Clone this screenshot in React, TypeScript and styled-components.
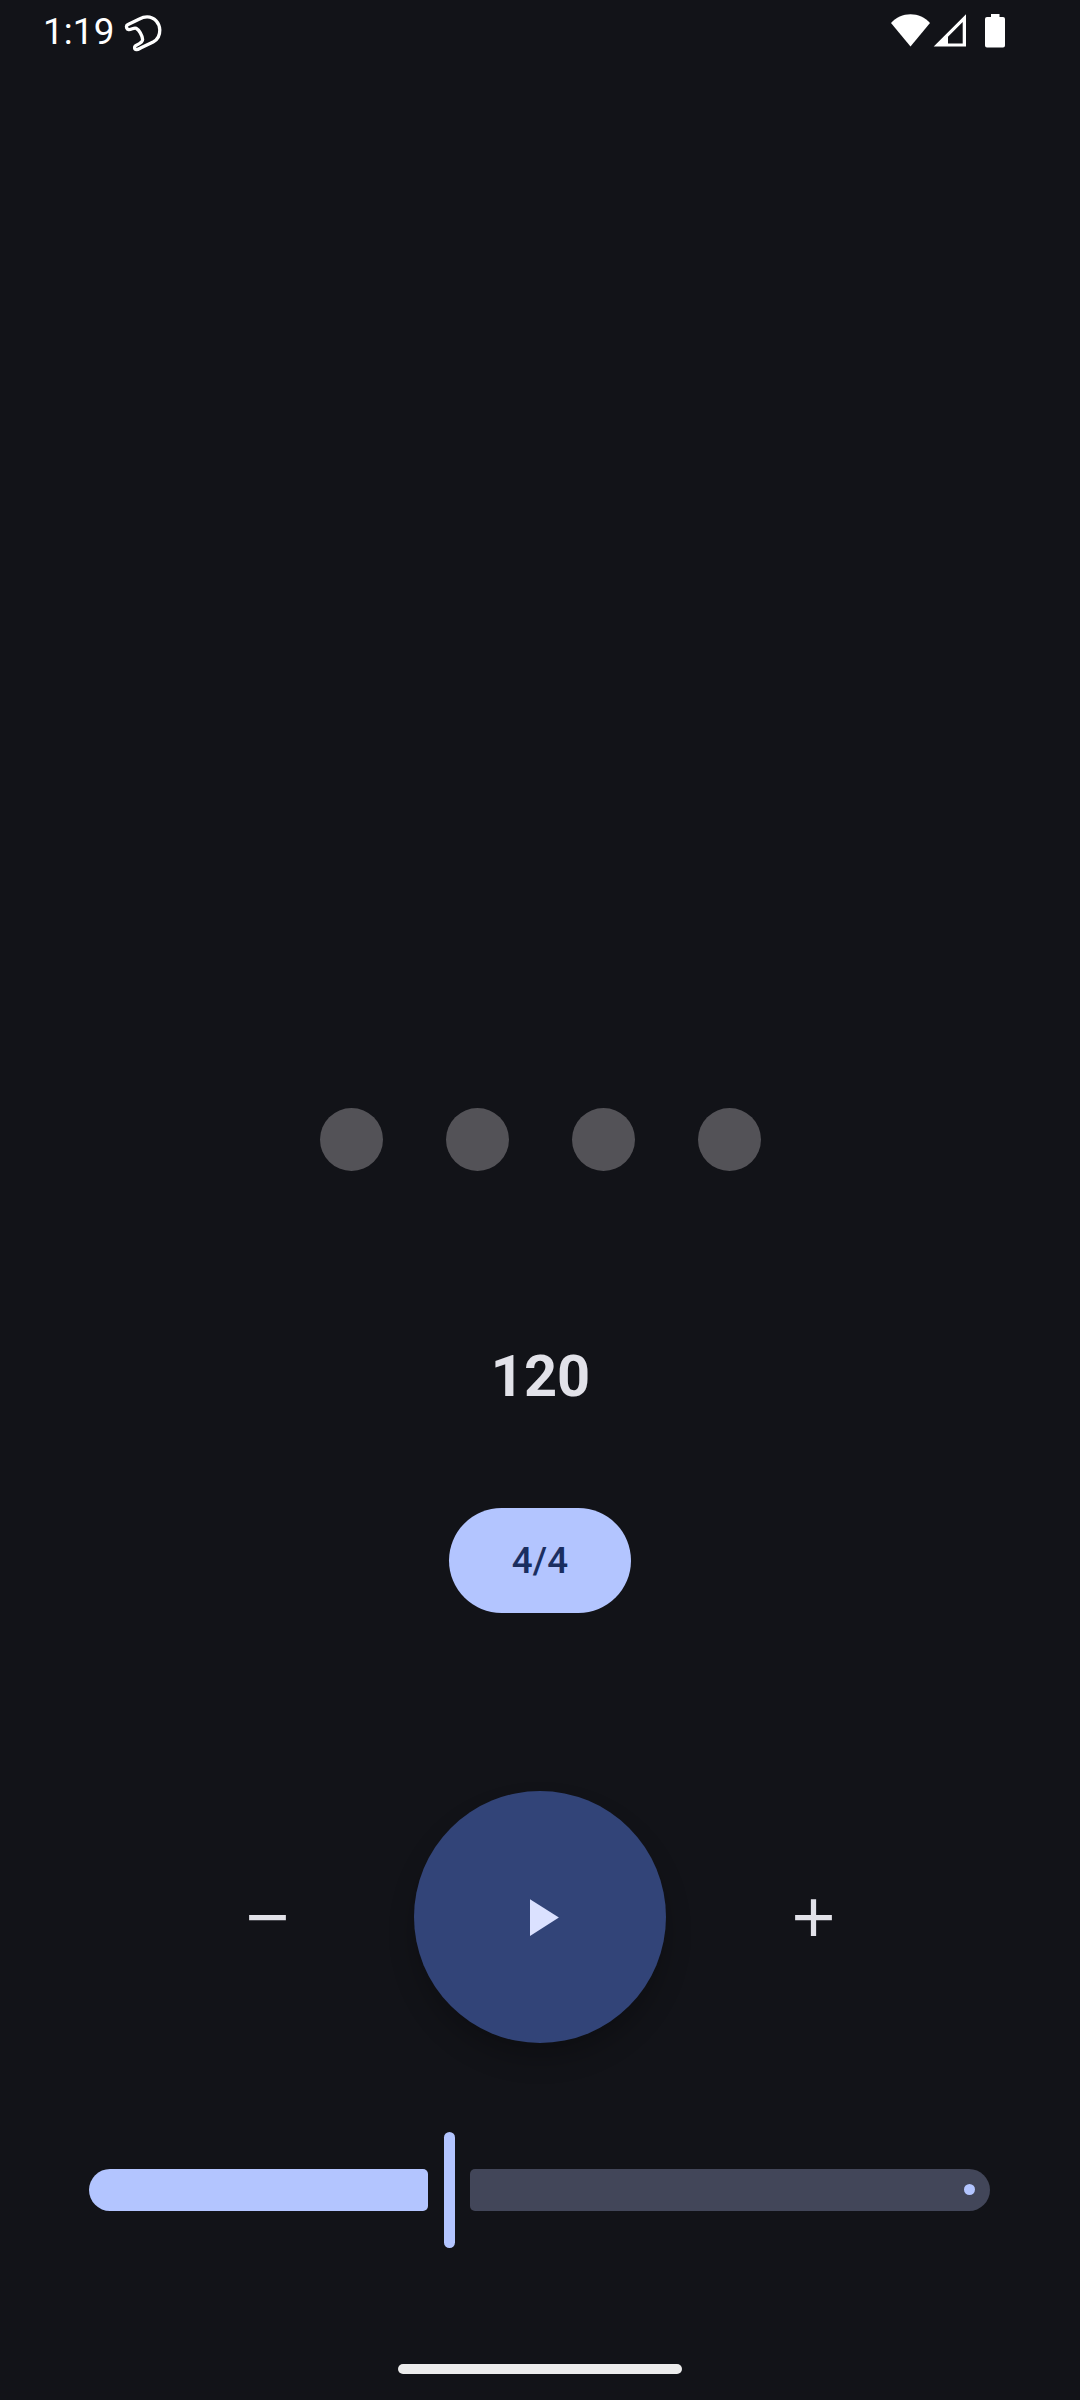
import React, { useState } from "react";
import styled, { createGlobalStyle } from "styled-components";

const color = {
  surface: "#121318",
  onSurface: "#e2e2e9",
  primary: "#b3c5ff",
  onPrimary: "#1a2e60",
  container: "#324478",
  onContainer: "#dbe1ff",
  track: "#424659",
  beat: "#535257",
};

const GlobalStyle = createGlobalStyle`
  html, body { margin: 0; background: ${color.surface}; }
  * { box-sizing: border-box; }
  button { border: 0; padding: 0; background: none; font: inherit; color: inherit; }
  svg { display: block; }
`;

const Screen = styled.div`
  width: 1080px;
  height: 2400px;
  display: flex;
  flex-direction: column;
  align-items: center;
  overflow: hidden;
  background: ${color.surface};
  color: ${color.onSurface};
  font-family: Roboto, "Liberation Sans", sans-serif;
`;

const StatusBar = styled.header`
  width: 100%;
  height: 63px;
  flex: none;
  display: flex;
  justify-content: space-between;
  align-items: flex-start;
  padding: 0 74px 0 43px;
  color: #fff;
`;

const StatusGroup = styled.div`
  display: flex;
  align-items: flex-start;
`;

const Clock = styled.span`
  width: 81px;
  padding-top: 10px;
  font-size: 36.75px;
  line-height: 43px;
  letter-spacing: 0.15px;
`;

const Beats = styled.div`
  display: flex;
  gap: 63px;
  margin-top: 1045px;
`;

const Beat = styled.span`
  width: 63px;
  height: 63px;
  border-radius: 50%;
  background: ${color.beat};
`;

const Tempo = styled.div`
  margin-top: 168px;
  height: 74px;
  padding-left: 1px;
  font-size: 57.75px;
  line-height: 74px;
  font-weight: 700;
`;

const Signature = styled.button`
  width: 182px;
  height: 105px;
  margin-top: 95px;
  border-radius: 53px;
  background: ${color.primary};
  color: ${color.onPrimary};
  font-size: 36.75px;
  line-height: 52px;
  font-weight: 500;
  letter-spacing: 0.1px;
`;

const Controls = styled.div`
  display: flex;
  align-items: center;
  gap: 115px;
  margin-top: 178px;
`;

const StepButton = styled.button<{ $shift?: number }>`
  width: 63px;
  height: 63px;
  margin: 1px ${(p) => -(p.$shift ?? 0)}px 0 ${(p) => p.$shift ?? 0}px;
`;

const PlayButton = styled.button`
  width: 252px;
  height: 252px;
  display: flex;
  align-items: center;
  justify-content: center;
  padding: 1px 0 0 1px;
  border-radius: 50%;
  background: ${color.container};
  color: ${color.onContainer};
  box-shadow: 0 16px 28px -2px rgba(0, 0, 0, 0.24);
`;

const Slider = styled.div`
  width: 901px;
  height: 116px;
  display: flex;
  align-items: center;
  margin: 89px 1px 0 0;
`;

const ActiveTrack = styled.div`
  width: 339.5px;
  height: 42px;
  border-radius: 21px 5px 5px 21px;
  background: ${color.primary};
`;

const Handle = styled.div`
  width: 11px;
  height: 116px;
  margin: 0 15px 0 16px;
  border-radius: 5.5px;
  background: ${color.primary};
`;

const RestTrack = styled.div`
  flex: 1;
  height: 42px;
  display: flex;
  align-items: center;
  justify-content: flex-end;
  padding: 0 15px 1px 0;
  border-radius: 5px 21px 21px 5px;
  background: ${color.track};
`;

const Stop = styled.span`
  width: 11px;
  height: 11px;
  border-radius: 50%;
  background: ${color.primary};
`;

const GestureBar = styled.div`
  width: 284px;
  height: 10px;
  margin-top: 116px;
  border-radius: 5px;
  background: #ececec;
`;

const AppGlyph = () => (
  <svg width="40" height="56" viewBox="124.4 0 40 56" fill="none" stroke="#fff" strokeWidth="3.3" strokeLinejoin="round" strokeLinecap="round">
    <path d="M127.3 25.2 C126.3 26.7 127 29.3 129.2 29.7 C132.2 29.8 134 27.4 136.5 28.3 C139.6 30 142.5 35 143 39.5 C143 42 140.8 43.3 137.2 45 C134.2 46.2 134.4 49.4 137 49.6 C138.6 49.5 140 48.5 142 47.5 L153.5 42 C157 40.2 160.3 36 160.2 30 C160 23 155 17 147.5 16.9 C144.5 16.9 142 17.8 139.3 19.2 L129 24.3 Z" />
  </svg>
);

const StatusIcons = () => (
  <svg width="120" height="56" viewBox="886 0 120 56" fill="#fff">
    <path d="M910.5 46.5 L891 23 C896 17.5 903 14.2 910.5 14.2 C918 14.2 925 17.5 930 23 Z" />
    <path fillRule="evenodd" d="M933.7 46.5 L966 14.2 V46.5 Z M948 36.7 V43.6 H962.7 V22 Z" />
    <path d="M991 14 H999.5 V17 H1003 Q1005 17 1005 19 V45.6 Q1005 47.6 1003 47.6 H987 Q985 47.6 985 45.6 V19 Q985 17 987 17 H991 Z" />
  </svg>
);

const Icon = ({ d }: { d: string }) => (
  <svg width="63" height="63" viewBox="0 0 24 24" fill="currentColor">
    <path d={d} />
  </svg>
);

export default function App() {
  const [bpm, setBpm] = useState(120);
  return (
    <>
      <GlobalStyle />
      <Screen>
        <StatusBar>
          <StatusGroup>
            <Clock>1:19</Clock>
            <AppGlyph />
          </StatusGroup>
          <StatusIcons />
        </StatusBar>
        <Beats>
          {[1, 2, 3, 4].map((n) => (
            <Beat key={n} />
          ))}
        </Beats>
        <Tempo>{bpm}</Tempo>
        <Signature>4/4</Signature>
        <Controls>
          <StepButton aria-label="Slower" onClick={() => setBpm(bpm - 1)}>
            <Icon d="M19 13H5v-2h14v2z" />
          </StepButton>
          <PlayButton aria-label="Play">
            <Icon d="M8 5v14l11-7z" />
          </PlayButton>
          <StepButton $shift={1} aria-label="Faster" onClick={() => setBpm(bpm + 1)}>
            <Icon d="M19 13h-6v6h-2v-6H5v-2h6V5h2v6h6v2z" />
          </StepButton>
        </Controls>
        <Slider>
          <ActiveTrack style={{ width: 339 }} />
          <Handle />
          <RestTrack>
            <Stop />
          </RestTrack>
        </Slider>
        <GestureBar />
      </Screen>
    </>
  );
}
